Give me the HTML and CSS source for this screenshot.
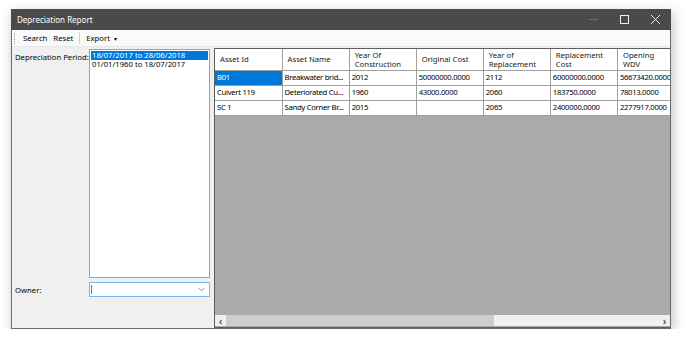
FILE: index.html
```
<!DOCTYPE html>
<html lang="en">
<head>
  <meta charset="UTF-8" />
  <title>Depreciation Report</title>
  <link rel="stylesheet" href="styles.css">
</head>
<body>
  <div class="window">
    <div class="titlebar">
      <span class="title">Depreciation Report</span>
      <div class="win-controls">
        <span class="ctl ctl-min">
          <svg viewBox="0 0 10 10"><line x1="0" y1="5" x2="10" y2="5" /></svg>
        </span>
        <span class="ctl">
          <svg viewBox="0 0 10 10"><rect x="0.5" y="0.5" width="9" height="9" /></svg>
        </span>
        <span class="ctl">
          <svg viewBox="0 0 10 10"><path d="M0 0L10 10M10 0L0 10" /></svg>
        </span>
      </div>
    </div>

    <div class="toolbar">
      <span class="grip"></span>
      <span class="tool">Search</span>
      <span class="tool">Reset</span>
      <span class="tool-sep"></span>
      <span class="tool">Export <span class="caret">&#9662;</span></span>
    </div>

    <div class="content">
      <div class="filters">
        <div class="filter-row period">
          <label>Depreciation Period:</label>
          <div class="listbox">
            <div class="list-item selected">18/07/2017 to 28/06/2018</div>
            <div class="list-item">01/01/1960 to 18/07/2017</div>
          </div>
        </div>
        <div class="filter-row">
          <label>Owner:</label>
          <div class="combo">
            <span class="cursor"></span>
            <svg class="combo-arrow" viewBox="0 0 8 5"><path d="M0.5 0.5L4 4L7.5 0.5" /></svg>
          </div>
        </div>
      </div>

      <div class="grid-view">
        <div class="grid-body">
          <table class="grid">
            <thead>
              <tr>
                <th>Asset Id</th>
                <th>Asset Name</th>
                <th>Year Of<br>Construction</th>
                <th>Original Cost</th>
                <th>Year of<br>Replacement</th>
                <th>Replacement<br>Cost</th>
                <th>Opening<br>WDV</th>
              </tr>
            </thead>
            <tbody>
              <tr>
                <td class="current">B01</td>
                <td>Breakwater brid...</td>
                <td>2012</td>
                <td>50000000.0000</td>
                <td>2112</td>
                <td>60000000.0000</td>
                <td>56673420.0000</td>
              </tr>
              <tr>
                <td>Culvert 119</td>
                <td>Deteriorated Cu...</td>
                <td>1960</td>
                <td>43000.0000</td>
                <td>2060</td>
                <td>183750.0000</td>
                <td>78013.0000</td>
              </tr>
              <tr>
                <td>SC 1</td>
                <td>Sandy Corner Br...</td>
                <td>2015</td>
                <td></td>
                <td>2065</td>
                <td>2400000.0000</td>
                <td>2277917.0000</td>
              </tr>
            </tbody>
          </table>
        </div>
        <div class="hscroll">
          <span class="arrow">&#8249;</span>
          <div class="track"><div class="thumb"></div></div>
          <span class="arrow">&#8250;</span>
        </div>
      </div>
    </div>
  </div>
</body>
</html>
```

FILE: styles.css
```
body {
  margin: 0;
  background: #fff;
  font-family: "Noto Sans", "Open Sans", sans-serif;
  font-size: 7.7px;
  color: #000;
}
.window {
  margin: 9px 0 0 11px;
  width: 660px;
  height: 320px;
  background: #f0f0f0;
  border: 1px solid #6d6d6d;
  border-top: none;
  box-sizing: border-box;
  display: flex;
  flex-direction: column;
  box-shadow: 2px 4px 12px rgba(0,0,0,0.25);
}
.titlebar {
  height: 21px;
  background: #4a4a4a;
  color: #fff;
  display: flex;
  align-items: center;
  justify-content: space-between;
  margin: 0 -1px;
  padding-left: 6px;
}
.title {
  font-size: 8px;
}
.win-controls {
  display: flex;
  height: 100%;
}
.ctl {
  width: 31px;
  display: flex;
  align-items: center;
  justify-content: center;
}
.ctl svg {
  width: 9px;
  height: 9px;
  stroke: #fff;
  stroke-width: 1;
  fill: none;
}
.ctl-min svg {
  stroke: #777;
}
.toolbar {
  height: 16px;
  background: #fafafa;
  border-bottom: 1px solid #e6e6e6;
  display: flex;
  align-items: center;
  padding-left: 2px;
}
.grip {
  width: 1px;
  height: 11px;
  border-left: 1px dotted #9a9a9a;
  margin-right: 4px;
}
.tool {
  padding: 0 3px;
}
.tool-sep {
  width: 1px;
  height: 12px;
  background: #d0d0d0;
  margin: 0 3px;
}
.caret {
  font-size: 6px;
  margin-left: 2px;
}
.content {
  flex: 1;
  display: flex;
  min-height: 0;
}
.filters {
  width: 202px;
  display: flex;
  flex-direction: column;
  padding: 2px 4px 0 3px;
  gap: 4px;
  box-sizing: border-box;
}
.filter-row {
  display: flex;
}
.filter-row label {
  width: 74px;
  padding-top: 3px;
}
.listbox {
  width: 121px;
  height: 229px;
  background: #fff;
  border: 1px solid #a0a0a0;
  box-sizing: border-box;
  padding: 1px;
}
.list-item {
  line-height: 9px;
  padding-left: 1px;
  color: #000;
}
.list-item.selected {
  background: #0078d7;
  color: #fff;
}
.combo {
  width: 121px;
  height: 15px;
  background: #fff;
  border: 1px solid #7ab6ee;
  box-sizing: border-box;
  display: flex;
  align-items: center;
  justify-content: space-between;
  padding: 0 4px 0 1px;
}
.cursor {
  width: 1px;
  height: 9px;
  background: #777;
}
.combo-arrow {
  width: 7px;
  height: 5px;
  stroke: #888;
  fill: none;
}
.grid-view {
  flex: 1;
  background: #ababab;
  border: 1px solid #5e5e5e;
  border-right: none;
  margin-top: 1px;
  display: flex;
  flex-direction: column;
  min-width: 0;
}
.grid-body {
  flex: 1;
  overflow: hidden;
}
.grid {
  border-collapse: collapse;
  table-layout: fixed;
  width: 470px;
}
.grid th,
.grid td {
  width: 67px;
  box-sizing: border-box;
  border: 1px solid #a0a0a0;
  background: #fff;
  text-align: left;
  white-space: nowrap;
  overflow: hidden;
  font-weight: normal;
}
.grid th {
  height: 21px;
  line-height: 9px;
  padding: 1px 4px 0 5px;
  border-top: none;
  color: #1a1a1a;
}
.grid tr > *:first-child {
  border-left: none;
}
.grid td {
  height: 15px;
  padding: 0 2px;
  line-height: 13px;
  letter-spacing: -0.3px;
}
.grid td.current {
  background: #0078d7;
  color: #fff;
}
.hscroll {
  height: 11px;
  background: #f0f0f0;
  display: flex;
  align-items: center;
  margin-bottom: 1px;
}
.hscroll .arrow {
  width: 11px;
  text-align: center;
  font-size: 10px;
  line-height: 10px;
  color: #606060;
  font-weight: bold;
}
.track {
  flex: 1;
  height: 100%;
}
.thumb {
  width: 268px;
  height: 100%;
  background: #cdcdcd;
}
```
